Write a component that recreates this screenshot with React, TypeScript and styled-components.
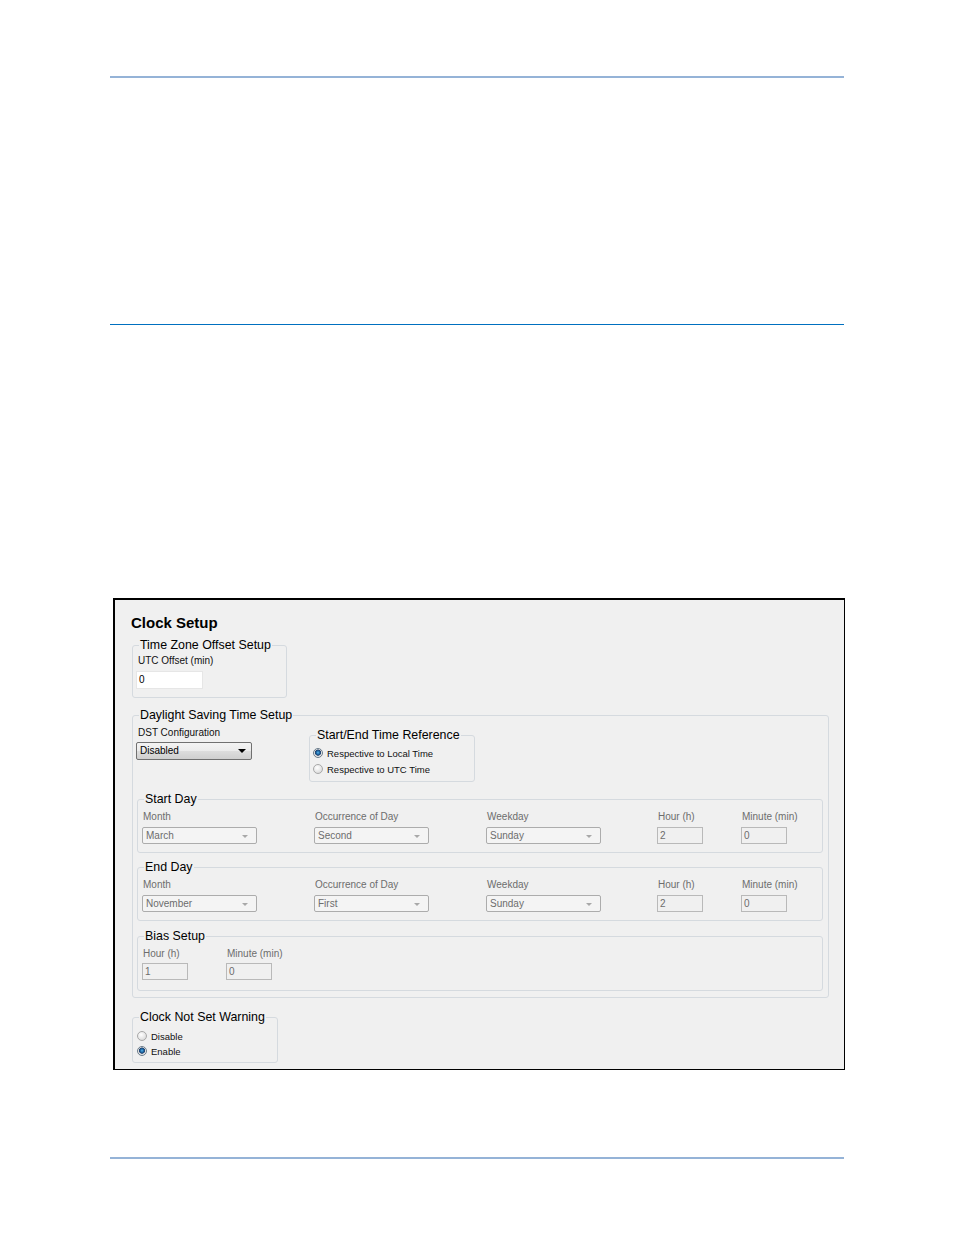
import React from 'react'
import styled, { createGlobalStyle } from 'styled-components'

const GlobalStyle = createGlobalStyle`
    html, body {
        margin: 0;
        padding: 0;
        background: #ffffff;
    }
    body {
        font-family: "Liberation Sans", Arial, sans-serif;
        color: #000;
    }
`

const Page = styled.div`
    width: 954px;
    height: 1235px;
    padding-top: 76px;
    box-sizing: border-box;
    overflow: hidden;
`

const Rule = styled.div<{ $color: string; $h: number; $mt: number }>`
    margin: ${p => p.$mt}px 0 0 110px;
    width: 734px;
    height: ${p => p.$h}px;
    background: ${p => p.$color};
`

const Frame = styled.div`
    margin: 273px 0 0 113px;
    width: 732px;
    height: 472px;
    box-sizing: border-box;
    border: 2px solid #000;
    border-right-width: 1px;
    border-bottom-width: 1px;
    background: #f0f0f0;
    padding: 14px 0 0 17px;
`

const Title = styled.div`
    margin-left: -1px;
    font-size: 15px;
    line-height: 18px;
    font-weight: bold;
    color: #000;
`

const Group = styled.fieldset<{ $w?: number; $mt: number }>`
    margin: ${p => p.$mt}px 0 0 0;
    padding: 0;
    min-width: 0;
    width: ${p => (p.$w ? `${p.$w}px` : 'auto')};
    box-sizing: border-box;
    border: 1px solid #d5dadf;
    border-radius: 3px;
`

const Legend = styled.legend`
    margin-left: 6px;
    padding: 0 1px;
    font-size: 12.4px;
    line-height: 14px;
    color: #000;
`

const GroupBody = styled.div<{ $pad: string }>`
    padding: ${p => p.$pad};
`

const FieldLabel = styled.div<{ $disabled?: boolean; $mt: number }>`
    margin: ${p => p.$mt}px 0 0 ${p => (p.$disabled ? 1 : 2)}px;
    font-size: 10px;
    line-height: 12px;
    white-space: nowrap;
    color: ${p => (p.$disabled ? '#6d6d6d' : '#111')};
`

const TextBox = styled.div<{ $disabled?: boolean; $w: number; $mt: number }>`
    margin-top: ${p => p.$mt}px;
    width: ${p => p.$w}px;
    height: ${p => (p.$disabled ? 17 : 18)}px;
    box-sizing: border-box;
    padding-left: 2px;
    font-size: 10px;
    line-height: ${p => (p.$disabled ? 15 : 16)}px;
    background: ${p => (p.$disabled ? '#f0f0f0' : '#ffffff')};
    border: 1px solid ${p => (p.$disabled ? '#b9b9b9' : '#e6e6e6')};
    color: ${p => (p.$disabled ? '#6d6d6d' : '#000')};
`

const Combo = styled.div<{ $disabled?: boolean; $w: number; $mt: number }>`
    position: relative;
    margin-top: ${p => p.$mt}px;
    width: ${p => p.$w}px;
    height: ${p => (p.$disabled ? 17 : 18)}px;
    box-sizing: border-box;
    padding-left: 3px;
    font-size: 10px;
    line-height: ${p => (p.$disabled ? 15 : 16)}px;
    border-radius: 2px;
    color: ${p => (p.$disabled ? '#6d6d6d' : '#000')};
    border: 1px solid ${p => (p.$disabled ? '#acacac' : '#707070')};
    background: ${p => (p.$disabled ? '#f4f4f4' : 'linear-gradient(#f3f3f3, #ebebeb 50%, #dddddd 51%, #cfcfcf)')};

    &::after {
        content: '';
        position: absolute;
        right: ${p => (p.$disabled ? 8 : 5)}px;
        top: ${p => (p.$disabled ? 7 : 6)}px;
        border-left: ${p => (p.$disabled ? 3 : 4)}px solid transparent;
        border-right: ${p => (p.$disabled ? 3 : 4)}px solid transparent;
        border-top: ${p => (p.$disabled ? 3 : 4)}px solid ${p => (p.$disabled ? '#a8a8a8' : '#000')};
    }
`

const TopRow = styled.div`
    display: flex;
    margin-left: -1px;
`

const LeftCol = styled.div`
    width: 173px;
    flex: none;
`

const RadioRow = styled.div<{ $mt: number }>`
    display: flex;
    align-items: center;
    gap: 4px;
    height: 14px;
    margin-top: ${p => p.$mt}px;
    font-size: 9.5px;
    color: #111;
    white-space: nowrap;
`

const RadioDot = styled.span<{ $checked?: boolean }>`
    width: 10px;
    height: 10px;
    flex: none;
    box-sizing: border-box;
    border-radius: 50%;
    border: 1px solid ${p => (p.$checked ? '#6b7c8a' : '#a8a8a8')};
    background: ${p =>
        p.$checked
            ? 'radial-gradient(circle at 50% 45%, #5fb4e8 0, #1b6aa8 1.6px, #23406b 2.8px, #e8e8e8 3.4px, #dcdcdc 100%)'
            : 'radial-gradient(circle at 40% 35%, #ffffff 0, #e4e4e4 60%, #cfcfcf 100%)'};
`

const DayGrid = styled.div<{ $cols: string }>`
    display: grid;
    grid-template-columns: ${p => p.$cols};
`

const DayCell = styled.div``

type DayField = { label: string; value: string; kind: 'combo' | 'text' }

const dayFields = (month: string, occurrence: string): DayField[] => [
    { label: 'Month', value: month, kind: 'combo' },
    { label: 'Occurrence of Day', value: occurrence, kind: 'combo' },
    { label: 'Weekday', value: 'Sunday', kind: 'combo' },
    { label: 'Hour (h)', value: '2', kind: 'text' },
    { label: 'Minute (min)', value: '0', kind: 'text' },
]

const DayGroup: React.FC<{ title: string; mt: number; fields: DayField[] }> = ({ title, mt, fields }) => {
    return (
        <Group $mt={mt}>
            <Legend>{title}</Legend>
            <GroupBody $pad="0 0 8px 4px">
                <DayGrid $cols="172px 172px 171px 84px auto">
                    {fields.map(f => (
                        <DayCell key={f.label}>
                            <FieldLabel $disabled $mt={5}>{f.label}</FieldLabel>
                            {f.kind === 'combo'
                                ? <Combo $disabled $w={115} $mt={4}>{f.value}</Combo>
                                : <TextBox $disabled $w={46} $mt={4}>{f.value}</TextBox>}
                        </DayCell>
                    ))}
                </DayGrid>
            </GroupBody>
        </Group>
    )
}

const App: React.FC = () => {
    return (
        <>
            <GlobalStyle />
            <Page>
                <Rule $color="#95b3d7" $h={2} $mt={0} />
                <Rule $color="#0070c0" $h={1} $mt={246} />
                <Frame>
                    <Title>Clock Setup</Title>

                    <Group $w={155} $mt={6}>
                        <Legend>Time Zone Offset Setup</Legend>
                        <GroupBody $pad="0 0 8px 3px">
                            <FieldLabel $mt={3}>UTC Offset (min)</FieldLabel>
                            <TextBox $w={67} $mt={4}>0</TextBox>
                        </GroupBody>
                    </Group>

                    <Group $w={697} $mt={10}>
                        <Legend>Daylight Saving Time Setup</Legend>
                        <GroupBody $pad="0 5px 6px 4px">
                            <TopRow>
                                <LeftCol>
                                    <FieldLabel $mt={5}>DST Configuration</FieldLabel>
                                    <Combo $w={116} $mt={3}>Disabled</Combo>
                                </LeftCol>
                                <Group $w={166} $mt={6}>
                                    <Legend>Start/End Time Reference</Legend>
                                    <GroupBody $pad="0 0 5px 3px">
                                        <RadioRow $mt={4}><RadioDot $checked />Respective to Local Time</RadioRow>
                                        <RadioRow $mt={2}><RadioDot />Respective to UTC Time</RadioRow>
                                    </GroupBody>
                                </Group>
                            </TopRow>

                            <DayGroup title="Start Day" mt={10} fields={dayFields('March', 'Second')} />
                            <DayGroup title="End Day" mt={7} fields={dayFields('November', 'First')} />

                            <Group $mt={8}>
                                <Legend>Bias Setup</Legend>
                                <GroupBody $pad="0 0 10px 4px">
                                    <DayGrid $cols="84px 84px auto">
                                        <DayCell>
                                            <FieldLabel $disabled $mt={5}>Hour (h)</FieldLabel>
                                            <TextBox $disabled $w={46} $mt={3}>1</TextBox>
                                        </DayCell>
                                        <DayCell>
                                            <FieldLabel $disabled $mt={5}>Minute (min)</FieldLabel>
                                            <TextBox $disabled $w={46} $mt={3}>0</TextBox>
                                        </DayCell>
                                    </DayGrid>
                                </GroupBody>
                            </Group>
                        </GroupBody>
                    </Group>

                    <Group $w={146} $mt={12}>
                        <Legend>Clock Not Set Warning</Legend>
                        <GroupBody $pad="0 0 4px 4px">
                            <RadioRow $mt={5}><RadioDot />Disable</RadioRow>
                            <RadioRow $mt={1}><RadioDot $checked />Enable</RadioRow>
                        </GroupBody>
                    </Group>
                </Frame>
                <Rule $color="#95b3d7" $h={2} $mt={87} />
            </Page>
        </>
    )
}

export default App
